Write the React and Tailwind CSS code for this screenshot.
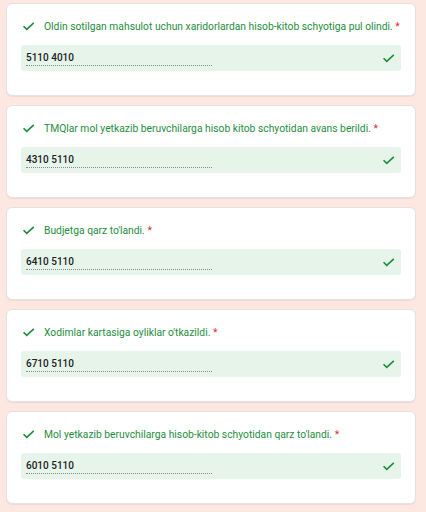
import React from 'react';

const items = [
  { q: 'Oldin sotilgan mahsulot uchun xaridorlardan hisob-kitob schyotiga pul olindi.', a: '5110 4010' },
  { q: 'TMQlar mol yetkazib beruvchilarga hisob kitob schyotidan avans berildi.', a: '4310 5110' },
  { q: 'Budjetga qarz to\'landi.', a: '6410 5110' },
  { q: 'Xodimlar kartasiga oyliklar o\'tkazildi.', a: '6710 5110' },
  { q: 'Mol yetkazib beruvchilarga hisob-kitob schyotidan qarz to\'landi.', a: '6010 5110' },
];

const Check = ({ className }) => (
  <svg viewBox="0 0 24 24" className={className} fill="none" stroke="currentColor" strokeWidth="2.6" strokeLinecap="square">
    <path d="M5 12.5l4.2 4.2L19.5 7" />
  </svg>
);

const QuestionCard = ({ q, a }) => (
  <div className="h-[93px] rounded-[6px] border border-[#e2e2e2] bg-white px-[14px] shadow-[0_1px_1px_rgba(0,0,0,0.06)]">
    <div className="mt-[15px] flex items-center">
      <Check className="h-[15px] w-[15px] text-[#1e8e3e]" />
      <span className="ml-[8px] whitespace-nowrap text-[10.3px] text-[#1e8e3e]">
        {q} <span className="text-[#d93025]">*</span>
      </span>
    </div>
    <div className="mt-[11px] flex h-[26px] items-center justify-between rounded-[3px] bg-[#e6f4ea] pl-[5px] pr-[5px]">
      <div className="w-[186px] border-b border-dotted border-[#8a8a8a] pb-[1px] text-[10px] font-medium leading-[13px] text-[#202124]">
        {a}
      </div>
      <Check className="h-[15px] w-[15px] text-[#1e8e3e]" />
    </div>
  </div>
);

export default function App() {
  return (
    <div className="min-h-[512px] bg-[#fde8e1] pl-[6px] pr-[10px] pt-[3px] pb-2 font-['Roboto',sans-serif]">
      <div className="flex flex-col gap-[9px]">
        {items.map((it) => (
          <QuestionCard key={it.a} q={it.q} a={it.a} />
        ))}
      </div>
    </div>
  );
}
